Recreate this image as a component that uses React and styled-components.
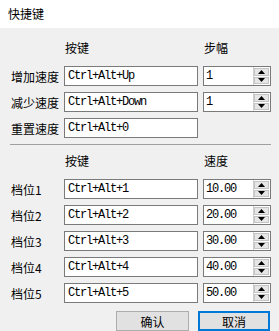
import React from 'react'
import styled, { createGlobalStyle } from 'styled-components'

const GlobalStyle = createGlobalStyle`
  html, body { margin: 0; padding: 0; }
  body {
    background: #f0f0f0;
    font-family: "Noto Sans CJK SC", "Noto Sans", sans-serif;
    font-size: 12px;
    color: #000;
  }
`

// styled
const Dialog = styled.div`
  width: 279px; height: 331px;
  background: #f0f0f0;
  display: flex; flex-direction: column;
  overflow: hidden;
`
const TitleBar = styled.div`
  height: 29px;
  background: #fff;
  display: flex; align-items: center;
  padding-left: 8px;
  padding-bottom: 2px;
  box-sizing: border-box;
`
const Body = styled.div`
  padding: 0 8px 0 10px;
  display: flex; flex-direction: column;
`
const Grid = styled.div`
  display: grid;
  grid-template-columns: 48px 134px 68px;
  column-gap: 6px;
  row-gap: 6px;
  grid-auto-rows: 20px;
  padding-top: ${(props) => props.$top}px;
  & > :nth-child(3n) { margin-left: -1px; }
`
const Header = styled.div`
  height: 16px;
  display: flex; align-items: center;
  padding-left: 1px;
  line-height: 16px;
`
const Label = styled.div`
  display: flex; align-items: center;
  padding-left: 1px;
  white-space: nowrap;
`
const monoText = `
  font-family: "Liberation Mono", "DejaVu Sans Mono", monospace;
  font-size: 12px;
  letter-spacing: -1.2px;
  color: #000;
`
const KeyInput = styled.input`
  box-sizing: border-box;
  width: 134px; height: 20px;
  margin: 0;
  border: 1px solid #7a7a7a;
  background: #fff;
  padding: 0 0 0 3px;
  outline: none;
  ${monoText}
`
const SpinBox = styled.div`
  box-sizing: border-box;
  width: 68px; height: 20px;
  border: 1px solid #7a7a7a;
  background: #fff;
  display: flex;
`
const SpinValue = styled.div`
  flex: 1;
  display: flex; align-items: center;
  padding-left: 2px;
  ${monoText}
`
const SpinButtons = styled.div`
  width: 15px;
  display: flex; flex-direction: column;
  border-left: 1px solid #d0d0d0;
  padding: 1px 1px 1px 0;
  gap: 1px;
`
const SpinButton = styled.div`
  flex: 1;
  background: #e6e6e6;
  border: 1px solid #c4c4c4;
  display: flex; align-items: center; justify-content: center;
`
const Divider = styled.div`
  height: 1px;
  background: #a0a0a0;
  margin-top: 6px;
  width: 261px;
`
const Empty = styled.div``
const ButtonRow = styled.div`
  display: flex; justify-content: flex-end;
  gap: 9px;
  margin-top: 8px;
  padding-right: 1px;
`
const DialogButton = styled.button`
  box-sizing: border-box;
  width: ${(props) => (props.$primary ? 72 : 73)}px;
  height: 20px;
  margin: 0; padding: 0;
  background: #e1e1e1;
  border: ${(props) => (props.$primary ? '2px solid #0078d7' : '1px solid #adadad')};
  font-family: "Noto Sans CJK SC", "Noto Sans", sans-serif;
  font-size: 12px;
  color: #000;
  display: flex; align-items: center; justify-content: center;
`

const Arrow = ({ up }) => (
  <svg width="7" height="4" viewBox="0 0 7 4">
    <polygon points={up ? '3.5,0 7,4 0,4' : '0,0 7,0 3.5,4'} fill="#000" />
  </svg>
)

const Spin = ({ value }) => (
  <SpinBox>
    <SpinValue>{value}</SpinValue>
    <SpinButtons>
      <SpinButton><Arrow up /></SpinButton>
      <SpinButton><Arrow /></SpinButton>
    </SpinButtons>
  </SpinBox>
)

const speedRows = [
  { label: '增加速度', keys: 'Ctrl+Alt+Up', step: '1' },
  { label: '减少速度', keys: 'Ctrl+Alt+Down', step: '1' },
  { label: '重置速度', keys: 'Ctrl+Alt+0' },
]

const gearRows = [1, 2, 3, 4, 5].map((n) => ({
  label: `档位${n}`,
  keys: `Ctrl+Alt+${n}`,
  speed: `${n * 10}.00`,
}))

const App = () => {
  return (
    <>
      <GlobalStyle />
      <Dialog>
        <TitleBar>快捷键</TitleBar>
        <Body>
          <Grid $top={12}>
            <Empty />
            <Header>按键</Header>
            <Header>步幅</Header>
            {speedRows.map((row) => (
              <React.Fragment key={row.label}>
                <Label>{row.label}</Label>
                <KeyInput defaultValue={row.keys} readOnly />
                {row.step ? <Spin value={row.step} /> : <Empty />}
              </React.Fragment>
            ))}
          </Grid>
          <Divider />
          <Grid $top={8}>
            <Empty />
            <Header>按键</Header>
            <Header>速度</Header>
            {gearRows.map((row) => (
              <React.Fragment key={row.label}>
                <Label>{row.label}</Label>
                <KeyInput defaultValue={row.keys} readOnly />
                <Spin value={row.speed} />
              </React.Fragment>
            ))}
          </Grid>
          <ButtonRow>
            <DialogButton>确认</DialogButton>
            <DialogButton $primary>取消</DialogButton>
          </ButtonRow>
        </Body>
      </Dialog>
    </>
  )
}

export default App
